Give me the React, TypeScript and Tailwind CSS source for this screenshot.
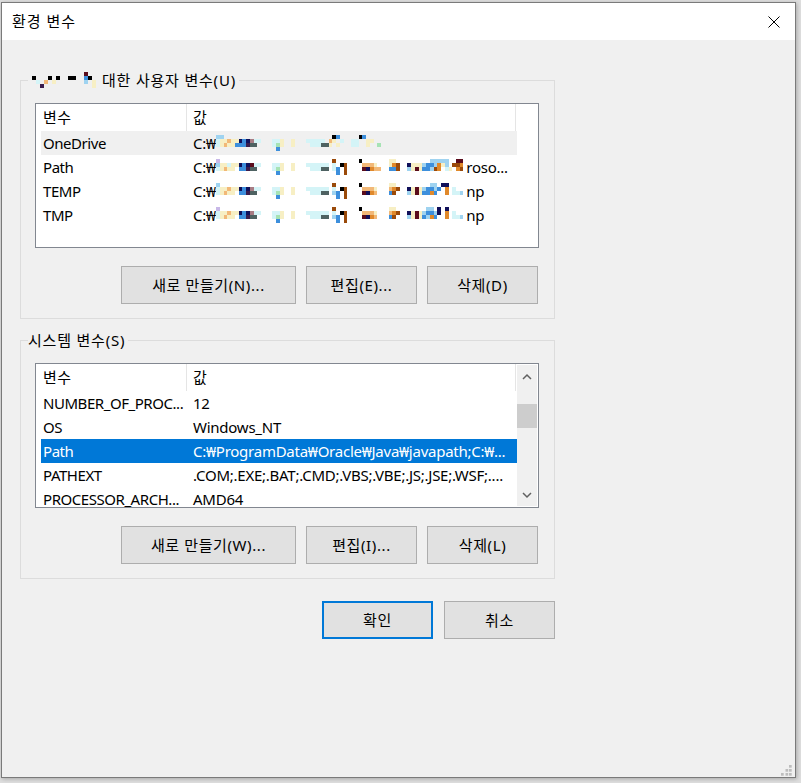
import React from "react";

const COLORS: Record<string, string> = {
  a: "#9fd3f0",
  c: "#d4f4f7",
  y: "#f7efc4",
  p: "#f2b877",
  o: "#e0892b",
  b: "#9a4a0a",
  n: "#10105a",
  B: "#3d8fdc",
  k: "#000000",
  m: "#5a0c1c",
  g: "#4e6262",
  G: "#a6e3b4",
  v: "#3a1c4c",
  r: "#a87c84",
  l: "#c8b8e8",
};

function parseRow(s: string): [number, string][] {
  return s
    .split(" ")
    .filter(Boolean)
    .map((t) => [parseInt(t, 10), t.replace(/[0-9]/g, "")] as [number, string]);
}

function Mosaic({ cols, rows, cw = 3.75, ch = 4 }: { cols: number; rows: string[]; cw?: number; ch?: number }) {
  return (
    <svg
      width={cols * cw}
      height={rows.length * ch}
      viewBox={`0 0 ${cols} ${rows.length}`}
      preserveAspectRatio="none"
      shapeRendering="crispEdges"
      className="shrink-0 block"
    >
      {rows.flatMap((r, y) =>
        parseRow(r).map(([x, c]) => <rect key={`${x}-${y}`} x={x} y={y} width={1} height={1} fill={COLORS[c]} />)
      )}
    </svg>
  );
}

const ONEDRIVE = [
  "0a 1a 31k 32B 38k 39B",
  "0c 1y 2y 3p 4y 5y 6n 7B 8n 9r 10c 11c 15c 16c 17y 20y 24c 25c 26c 27c 28c 30p 31y 33c 36c 37c 40y 41y",
  "0c 1y 2p 3y 4y 5B 6B 7B 8v 9g 10g 15c 16G 17y 20y 25c 26c 27c 28g 29g 30y 32y 36c 37c 40y 43G",
  "16B",
];
const PATH = [
  "0l 31b 38k 46y 47y 57a 58a 59a 60a 61a 64m 65m",
  "0a 1y 2y 3c 4y 5y 6n 7B 8n 9m 10c 11c 15c 16c 17y 20y 24c 25c 26c 27c 28c 29c 31c 33k 34b 39p 40p 41p 42y 46y 47o 48b 51n 52y 53y 54y 55a 56B 57B 58a 59o 60y 61a 63b 64b 65o",
  "0c 1y 2p 3y 4y 6B 7B 8v 9g 10g 15c 16G 17y 20y 25c 26c 27c 28g 29g 31c 32B 34b 39m 40n 41o 42p 43p 46B 47B 48b 51a 52y 53m 54y 55B 56B 57a 58b 59o 61c 62y 64o 65b",
  "16B 32B 34b",
];
const TEMP = [
  "0a 31b 38k 46y 47y 57a 58a 60n 61n",
  "0c 1y 2y 3p 4y 5y 6n 7B 8n 9r 10c 11c 15c 16c 17y 20y 24c 25c 26c 27c 28c 29c 31c 33k 34b 39p 40p 41p 42y 46p 47o 48b 51n 52y 53m 54y 55a 56B 57B 58a 59B 61o 63c",
  "0c 1y 2p 3y 4y 6B 7B 8v 9g 10g 15c 16G 17y 20y 25c 26c 27c 28g 29g 31a 32B 34b 39m 40n 41o 42p 46B 47b 51a 52y 53m 54y 55B 56B 57o 58B 61o 63c 64c 65a",
  "16B 32B 34b",
];
const TMP = [
  "0l 31b 38k 46y 47y 56a 57a 59n 61n",
  "0c 1y 2y 3p 4y 5y 6n 7B 8n 9r 10c 11c 15c 16c 17y 20y 24c 25c 26c 27c 28c 29c 31c 33k 34b 39p 40p 41p 42y 46p 47o 48b 51n 52y 53m 54y 55a 56B 57B 58a 59n 61o 63c",
  "0c 1y 2p 3y 4y 6B 7B 8v 9g 10g 15c 16G 17y 20y 25c 26c 27c 28g 29g 31a 32B 34b 39m 40n 41o 42p 46B 47b 51a 52y 53m 54y 55B 56a 57o 58B 61o 63c 64c 65a",
  "16B 32B 34b",
];
const NAME = ["13m", "0k 4k 6k 9k 10k 13B 14k", "1c 3p 5y 13a 15y", "2v 15y"];

function GroupBox({ label, children }: { label: React.ReactNode; children: React.ReactNode }) {
  return (
    <div className="relative w-[535px] h-[239px] border border-[#dcdcdc] pt-[22px] pl-[14px]">
      <div className="absolute left-[7px] -top-[11px] flex items-center h-[20px] bg-[#f0f0f0] pr-[3px] leading-[20px] whitespace-nowrap">
        {label}
      </div>
      {children}
    </div>
  );
}

function Btn({ w, children, primary }: { w: string; children: React.ReactNode; primary?: boolean }) {
  return (
    <div
      className={`${w} h-[38px] bg-[#e1e1e1] flex items-center justify-center whitespace-nowrap leading-none tracking-[0.6px] ${
        primary ? "border-2 border-[#0078d7]" : "border border-[#adadad]"
      }`}
    >
      {children}
    </div>
  );
}

function Header() {
  return (
    <div className="flex h-[27px] shrink-0 leading-[27px]">
      <div className="w-[150px] pl-[7px] tracking-[0.5px]">변수</div>
      <div className="w-px bg-[#e5e5e5]" />
      <div className="w-[328px] pl-[6px]">값</div>
      <div className="w-px bg-[#e5e5e5]" />
    </div>
  );
}

function Row({ name, value, bg, white }: { name: string; value: React.ReactNode; bg?: string; white?: boolean }) {
  return (
    <div
      className={`flex items-center w-[476px] h-[24px] shrink-0 tracking-[-0.25px] ${bg ?? ""} ${
        white ? "text-white" : ""
      }`}
    >
      <div className="w-[146px] pl-[2px] whitespace-nowrap overflow-hidden tracking-[-0.45px]">{name}</div>
      <div className="flex-1 pl-[6px] flex items-center whitespace-nowrap overflow-hidden">{value}</div>
    </div>
  );
}

function MaskedValue({ rows, cols, tail }: { rows: string[]; cols: number; tail?: string }) {
  return (
    <>
      <span>C:₩</span>
      <Mosaic cols={cols} rows={rows} />
      {tail ? <span className="ml-[3px]">{tail}</span> : null}
    </>
  );
}

function Chevron({ up }: { up?: boolean }) {
  return (
    <svg width="10" height="7" viewBox="0 0 10 7">
      <path d={up ? "M1 6 L5 2 L9 6" : "M1 1 L5 5 L9 1"} fill="none" stroke="#606060" strokeWidth="1.5" />
    </svg>
  );
}

export default function App() {
  return (
    <div className="w-[801px] h-[783px] overflow-hidden bg-[#dedede] pt-[2px] pl-[1px] font-['Noto_Sans','Noto_Sans_CJK_KR',sans-serif] text-[15px] text-black">
      <div className="relative flex flex-col w-[795px] h-[776px] border border-[#7a7a7a] bg-[#f0f0f0] shadow-[1px_1px_4px_rgba(0,0,0,0.25)]">
        {/* Title bar */}
        <div className="flex items-center justify-between h-[37px] shrink-0 bg-white pl-[10px] pr-[15px]">
          <span className="leading-[20px] mt-[-1px] tracking-[1px]">환경 변수</span>
          <svg width="12" height="12" viewBox="0 0 12 12">
            <path d="M0.5 0.5 L11.5 11.5 M11.5 0.5 L0.5 11.5" stroke="#000" strokeWidth="1" />
          </svg>
        </div>

        {/* Body */}
        <div className="flex flex-col pl-[18px] pt-[40px]">
          <GroupBox
            label={
              <>
                <div className="pl-[4px]">
                  <Mosaic cols={16} rows={NAME} cw={4} ch={4} />
                </div>
                <span className="ml-[6px] tracking-[0.8px]">대한 사용자 변수(U)</span>
              </>
            }
          >
            <div className="w-[504px] h-[145px] border border-[#828790] bg-white flex flex-col overflow-hidden">
              <Header />
              <div className="flex flex-col pl-[5px]">
                <Row name="OneDrive" bg="bg-[#f0f0f0]" value={<MaskedValue rows={ONEDRIVE} cols={46} />} />
                <Row name="Path" value={<MaskedValue rows={PATH} cols={66} tail="roso..." />} />
                <Row name="TEMP" value={<MaskedValue rows={TEMP} cols={66} tail="np" />} />
                <Row name="TMP" value={<MaskedValue rows={TMP} cols={66} tail="np" />} />
              </div>
            </div>
            <div className="w-[504px] flex justify-end gap-[10px] mt-[18px] pr-[1px]">
              <Btn w="w-[175px]">새로 만들기(N)...</Btn>
              <Btn w="w-[111px]">편집(E)...</Btn>
              <Btn w="w-[111px]">삭제(D)</Btn>
            </div>
          </GroupBox>

          <div className="mt-[21px]">
            <GroupBox label={<span className="tracking-[0.8px]">시스템 변수(S)</span>}>
              <div className="w-[504px] h-[145px] border border-[#828790] bg-white flex overflow-hidden">
                <div className="flex-1 flex flex-col overflow-hidden">
                  <Header />
                  <div className="flex flex-col pl-[5px]">
                    <Row name="NUMBER_OF_PROC..." value="12" />
                    <Row name="OS" value="Windows_NT" />
                    <Row name="Path" bg="bg-[#0078d7]" white value="C:₩ProgramData₩Oracle₩Java₩javapath;C:₩..." />
                    <Row name="PATHEXT" value=".COM;.EXE;.BAT;.CMD;.VBS;.VBE;.JS;.JSE;.WSF;...." />
                    <Row name="PROCESSOR_ARCH..." value="AMD64" />
                  </div>
                </div>
                <div className="w-[20px] my-[1px] mr-[1px] bg-[#f0f0f0] flex flex-col shrink-0">
                  <div className="h-[20px] flex items-center justify-center pt-[2px]">
                    <Chevron up />
                  </div>
                  <div className="h-[19px]" />
                  <div className="h-[24px] bg-[#cdcdcd]" />
                  <div className="flex-1" />
                  <div className="h-[20px] flex items-center justify-center pb-[1px]">
                    <Chevron />
                  </div>
                </div>
              </div>
              <div className="w-[504px] flex justify-end gap-[10px] mt-[18px] pr-[1px]">
                <Btn w="w-[175px]">새로 만들기(W)...</Btn>
                <Btn w="w-[111px]">편집(I)...</Btn>
                <Btn w="w-[111px]">삭제(L)</Btn>
              </div>
            </GroupBox>
          </div>

          <div className="w-[535px] flex justify-end gap-[11px] mt-[22px]">
            <Btn w="w-[111px]" primary>
              확인
            </Btn>
            <Btn w="w-[111px]">취소</Btn>
          </div>
        </div>

        {/* Resize grip */}
        <svg className="absolute right-[3px] bottom-[1px]" width="11" height="11" viewBox="0 0 11 11">
          <rect x="8" y="0" width="2.7" height="2.7" fill="#bdbdbd" />
          <rect x="4.5" y="4" width="2.7" height="2.7" fill="#bdbdbd" />
          <rect x="8" y="4" width="2.7" height="2.7" fill="#bdbdbd" />
          <rect x="0" y="8" width="2.7" height="2.7" fill="#bdbdbd" />
          <rect x="4.5" y="8" width="2.7" height="2.7" fill="#bdbdbd" />
          <rect x="8" y="8" width="2.7" height="2.7" fill="#bdbdbd" />
        </svg>
      </div>
    </div>
  );
}
